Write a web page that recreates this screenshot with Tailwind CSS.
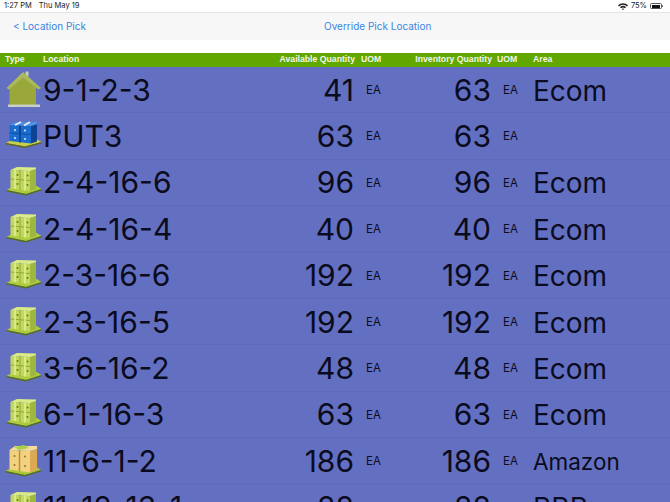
<!DOCTYPE html>
<html lang="en">
<head>
    <meta charset="UTF-8">
    <title>Override Pick Location</title>
    <script src="https://cdn.jsdelivr.net/npm/@tailwindcss/browser@4"></script>
</head>
<body class="h-[502px] overflow-hidden bg-white font-['Inter',sans-serif]">
    <svg width="0" height="0" class="absolute">
        <defs>
            <symbol id="pallet-green" viewBox="0 0 38 38">
                <path d="M2.5 27 L10 23 L31 22 L37.5 26 L22 31 Z" fill="#aecb3c"/>
                <path d="M2.5 27 L22 31 L37.5 26 L37.5 27.5 L22 32.5 L2.5 28.5 Z" fill="#56701a"/>
                <path d="M6.5 7 L26 8 L26 28 L6.5 25.5 Z" fill="#c2d85c"/>
                <path d="M26 8 L32 6 L32 26 L26 28 Z" fill="#9cb83e"/>
                <path d="M6.5 7 L13 4 L32 4.5 L32 6 L26 8 Z" fill="#dcec84"/>
                <path d="M16 6.5 V27 M6.5 16 L26 17.5" stroke="#8fa936" stroke-width="1"/>
                <path d="M11 7 V26 M21 7.5 V27.5" stroke="#e2eea0" stroke-width="1.5"/>
                <circle cx="13.5" cy="12" r="1" fill="#5f7a1e"/><circle cx="13.5" cy="21" r="1" fill="#5f7a1e"/>
                <circle cx="23.5" cy="12.5" r="1" fill="#5f7a1e"/><circle cx="23.5" cy="22" r="1" fill="#5f7a1e"/>
            </symbol>
            <symbol id="pallet-blue" viewBox="0 0 38 38">
                <path d="M2 26 L9 22 L31 21 L37.5 25 L21 29.5 Z" fill="#c8d048"/>
                <path d="M2 26 L21 29.5 L37.5 25 L37.5 26.5 L21 31 L2 27.5 Z" fill="#5e6a18"/>
                <path d="M5.5 8 L27 9 L27 26.5 L5.5 24 Z" fill="#1b6ccf"/>
                <path d="M27 9 L33 7 L33 24.5 L27 26.5 Z" fill="#0e4393"/>
                <path d="M5.5 8 L12 5 L33 5 L33 7 L27 9 Z" fill="#4c92e0"/>
                <path d="M11 8 L17 5 M20 8.5 L26 5" stroke="#e6effa" stroke-width="1.6"/>
                <path d="M16 8.5 V25.5" stroke="#0c3c86" stroke-width="1.6"/>
                <path d="M5.5 16 L27 17.5" stroke="#0f4ea6" stroke-width="1"/>
                <circle cx="11" cy="13" r="1" fill="#dfeafa"/><circle cx="11" cy="21" r="1" fill="#dfeafa"/>
                <circle cx="21" cy="13.5" r="1" fill="#dfeafa"/><circle cx="21" cy="22" r="1" fill="#dfeafa"/>
            </symbol>
            <symbol id="pallet-tan" viewBox="0 0 38 38">
                <path d="M1.5 29 L9 25 L31 24 L37 28 L21 33 Z" fill="#a8c838"/>
                <path d="M1.5 29 L21 33 L37 28 L37 29.5 L21 34.5 L1.5 30.5 Z" fill="#56701a"/>
                <path d="M5.5 8 L26 9 L26 30.5 L5.5 27.5 Z" fill="#f3d27f"/>
                <path d="M26 9 L33 7 L33 28 L26 30.5 Z" fill="#dcaa52"/>
                <path d="M5.5 8 L11 4 L33 4 L33 7 L26 9 Z" fill="#f6dc9a"/>
                <path d="M10 5 L20 3 L25 6 L15 8 Z" fill="#a9cf4a"/>
                <path d="M15.5 8.5 V29" stroke="#b98d3c" stroke-width="1.5"/>
                <circle cx="10.5" cy="14" r="1" fill="#94702a"/><circle cx="10.5" cy="23" r="1" fill="#94702a"/>
                <circle cx="21" cy="14.5" r="1" fill="#94702a"/><circle cx="21" cy="24" r="1" fill="#94702a"/>
            </symbol>
            <symbol id="house" viewBox="0 0 38 38">
                <path d="M21.5 0.5 h3 v5 h-3 Z" fill="#c8cdb0"/>
                <path d="M5.5 15 L19 5 L32 15 V34 H5.5 Z" fill="#9aa83a"/>
                <path d="M2.5 17 L19 1 L37 17 L34.5 18.5 L19 6.5 L5 18.5 Z" fill="#abb95e"/>
                <path d="M4 33.5 H36 V36 H4 Z" fill="#c9cfc4"/>
            </symbol>
        </defs>
    </svg>

    <!-- status bar -->
    <div class="flex h-3 items-center justify-between px-[4px] text-[7.5px] text-[#222]">
        <div class="flex gap-[7px]"><span>1:27 PM</span><span>Thu May 19</span></div>
        <div class="flex items-center gap-[3px] pr-[3px]">
            <svg width="10" height="7" viewBox="0 0 10 7"><path d="M0 2.3 A7 7 0 0 1 10 2.3 L8.9 3.4 A5.5 5.5 0 0 0 1.1 3.4Z M2 4.2 A4.3 4.3 0 0 1 8 4.2 L6.9 5.3 A2.8 2.8 0 0 0 3.1 5.3Z M3.8 6 A1.7 1.7 0 0 1 6.2 6 L5 7Z" fill="#222"/></svg>
            <span>75%</span>
            <div class="flex items-center">
                <div class="h-[6px] w-[12px] rounded-[1.5px] border border-[#555] p-[0.5px]"><div class="h-full w-[8px] bg-[#111]"></div></div>
                <div class="h-[2px] w-px bg-[#777]"></div>
            </div>
        </div>
    </div>

    <!-- nav bar -->
    <div class="relative flex h-[28px] items-center border-t border-[#e4e4e4] bg-[#f7f7f7] pl-[13px] text-[10px] text-[#3a85e0]">
        <span>&lt; Location Pick</span>
        <span class="absolute left-[324px]">Override Pick Location</span>
    </div>

    <div class="h-[13px] bg-white"></div>

    <!-- column headers -->
    <div class="grid h-[14px] grid-cols-[43px_193px_119px_45px_92px_41px_1fr] items-center whitespace-nowrap bg-[#62a600] font-['Liberation_Sans',sans-serif] text-[8.7px] font-bold text-[#f2f6e8]">
        <span class="pl-[5px]">Type</span>
        <span>Location</span>
        <span class="text-right">Available Quantity</span>
        <span class="pl-[6px]">UOM</span>
        <span class="text-right">Inventory Quantity</span>
        <span class="pl-[5px]">UOM</span>
        <span>Area</span>
    </div>

    <!-- rows -->
    <div id="rows" class="bg-[#6370c1]"></div>

    <script>
        const rows = [
            ["house", "9-1-2-3", "41", "63", "Ecom"],
            ["pallet-blue", "PUT3", "63", "63", ""],
            ["pallet-green", "2-4-16-6", "96", "96", "Ecom"],
            ["pallet-green", "2-4-16-4", "40", "40", "Ecom"],
            ["pallet-green", "2-3-16-6", "192", "192", "Ecom"],
            ["pallet-green", "2-3-16-5", "192", "192", "Ecom"],
            ["pallet-green", "3-6-16-2", "48", "48", "Ecom"],
            ["pallet-green", "6-1-16-3", "63", "63", "Ecom"],
            ["pallet-tan", "11-6-1-2", "186", "186", "Amazon"],
            ["pallet-green", "11-12-13-1", "88", "88", "BBB"]
        ];
        document.getElementById("rows").innerHTML = rows.map(r => `
            <div class="grid h-[46.4px] grid-cols-[43px_193px_118px_45px_92px_42px_1fr] items-center whitespace-nowrap border-b border-[#5e6bbc] text-[#0b0b20]">
                <svg width="38" height="38" class="ml-[4px]"><use href="#${r[0]}"/></svg>
                <span class="text-[30px] leading-none">${r[1]}</span>
                <span class="text-right text-[30px] leading-none">${r[2]}</span>
                <span class="pl-[12px] pt-[2px] text-[11.5px]">EA</span>
                <span class="text-right text-[30px] leading-none">${r[3]}</span>
                <span class="pl-[12px] pt-[2px] text-[11.5px]">EA</span>
                <span class="${r[4] === "Amazon" ? "text-[22.5px]" : "text-[28px]"} pt-[2px] leading-none">${r[4]}</span>
            </div>`).join("");
    </script>
</body>
</html>
